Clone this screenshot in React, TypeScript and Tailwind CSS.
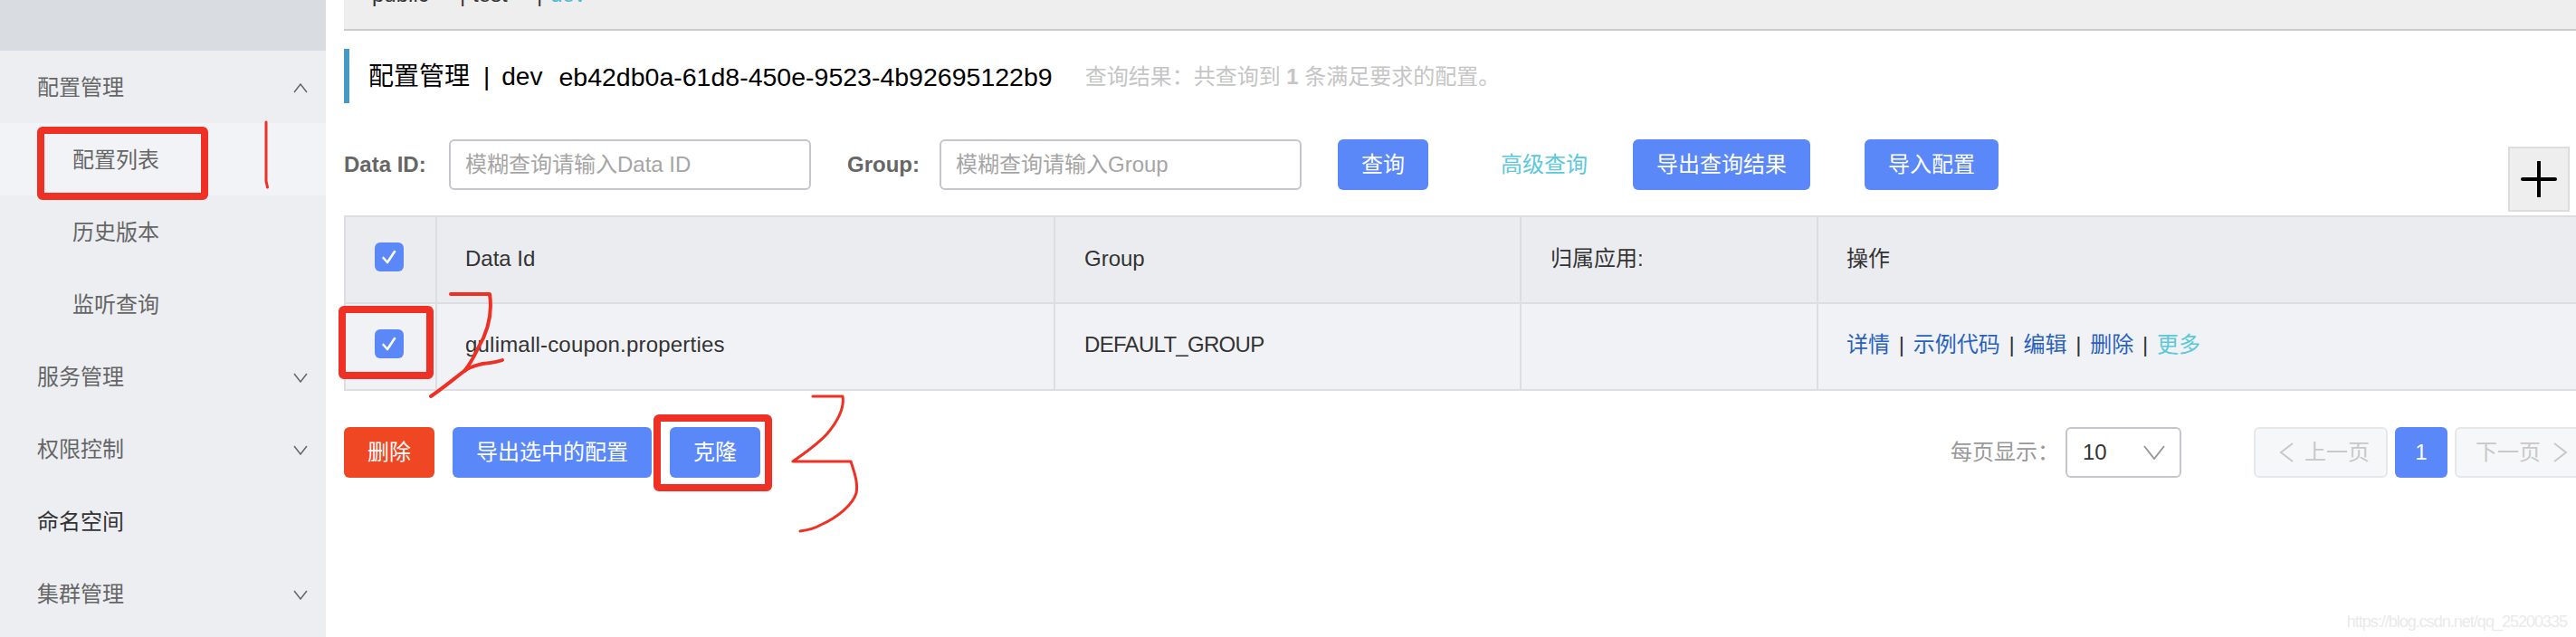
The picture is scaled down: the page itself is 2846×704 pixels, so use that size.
import React from "react";

const font = { fontFamily: '"Liberation Sans", "Noto Sans CJK SC", sans-serif' };

function Chevron({ up = false }: { up?: boolean }) {
  return (
    <svg width="16" height="11" viewBox="0 0 16 11" fill="none" stroke="#666" strokeWidth="1.5">
      <polyline points={up ? "1,10 8,1 15,10" : "1,1 8,10 15,1"} />
    </svg>
  );
}

function NavItem({ label, sub, active, arrow, dark }: { label: string; sub?: boolean; active?: boolean; arrow?: "up" | "down"; dark?: boolean }) {
  return (
    <div
      className={`h-[80px] flex items-center justify-between pt-[2px] pr-[20px] text-[24px] ${sub ? "pl-[80px]" : "pl-[41px]"} ${active ? "bg-[#f2f3f7]" : ""} ${dark ? "text-[#333333]" : "text-[#666666]"}`}
    >
      <span>{label}</span>
      {arrow && <Chevron up={arrow === "up"} />}
    </div>
  );
}

function Check() {
  return (
    <div className="w-[32px] h-[32px] rounded-[6px] bg-[#5b88f8] flex items-center justify-center">
      <svg width="18" height="18" viewBox="0 0 18 18" fill="none" stroke="#fff" strokeWidth="2.6" strokeLinecap="round" strokeLinejoin="round">
        <polyline points="2.5,10 7,15 15,3" />
      </svg>
    </div>
  );
}

function Btn({ w, children, red }: { w: string; children: React.ReactNode; red?: boolean }) {
  return (
    <div className={`${w} h-[56px] shrink-0 rounded-[6px] flex items-center justify-center text-[24px] text-white ${red ? "bg-[#ef4723]" : "bg-[#5b88f8]"}`}>
      {children}
    </div>
  );
}

function Input({ placeholder }: { placeholder: string }) {
  return (
    <div className="w-[400px] h-[56px] shrink-0 border-2 border-[#c4c6cf] rounded-[6px] pl-[16px] flex items-center text-[24px] text-[#a5a5a5]">
      {placeholder}
    </div>
  );
}

const Sep = () => <span className="text-[#333333] mx-[9.75px]">|</span>;
const cell = "border-l-2 border-[#dcdee3] flex items-center text-[24px] text-[#333333]";

export default function App() {
  return (
    <div className="relative w-[2846px] h-[704px] overflow-hidden flex bg-white" style={font}>
      <aside className="w-[360px] shrink-0 bg-[#eceef2]">
        <div className="h-[56px] bg-[#d9dce1]" />
        <NavItem label="配置管理" arrow="up" />
        <NavItem label="配置列表" sub active />
        <NavItem label="历史版本" sub />
        <NavItem label="监听查询" sub />
        <NavItem label="服务管理" arrow="down" />
        <NavItem label="权限控制" arrow="down" />
        <NavItem label="命名空间" dark />
        <NavItem label="集群管理" arrow="down" />
      </aside>

      <main className="flex-1 min-w-0 pl-[20px] overflow-hidden">
        <div className="h-[34px] bg-[#eeeeee] border-b-2 border-[#cccccc] overflow-hidden pl-[31px] text-[24px] text-[#333333]">
          <div className="flex -mt-[22px] h-[32px] items-center">
            <span className="w-[97px]">public</span>
            <span className="w-[14px]">|</span>
            <span className="w-[71px]">test</span>
            <span className="w-[15px]">|</span>
            <span className="text-[#4fb8d6]">dev</span>
          </div>
        </div>

        <div className="mt-[20px] h-[60px] border-l-[6px] border-[#4599c5] pl-[21px] pt-[2px] flex items-center text-[#000000]">
          <span className="text-[28px]">配置管理</span>
          <span className="text-[28px] ml-[15px]">|</span>
          <span className="text-[28px] ml-[13px]">dev</span>
          <span className="text-[28.5px] ml-[18px]">eb42db0a-61d8-450e-9523-4b92695122b9</span>
          <span className="text-[24px] text-[#c5c5c5] ml-[36px]">
            查询结果：共查询到 <b>1</b> 条满足要求的配置。
          </span>
        </div>

        <div className="mt-[40px] h-[84px] flex items-start">
          <div className="h-[56px] w-[116px] shrink-0 flex items-center text-[24px] font-bold text-[#666666]">Data ID:</div>
          <Input placeholder="模糊查询请输入Data ID" />
          <div className="h-[56px] w-[102px] ml-[40px] shrink-0 flex items-center text-[24px] font-bold text-[#666666]">Group:</div>
          <Input placeholder="模糊查询请输入Group" />
          <div className="ml-[40px]"><Btn w="w-[100px]">查询</Btn></div>
          <div className="h-[56px] ml-[80px] w-[146px] shrink-0 flex items-center text-[24px] text-[#5cc8dc]">高级查询</div>
          <Btn w="w-[196px]">导出查询结果</Btn>
          <div className="ml-[60px]"><Btn w="w-[148px]">导入配置</Btn></div>
          <div className="ml-[563px] mt-[8px] w-[68px] h-[72px] shrink-0 bg-[#eeeeee] border-2 border-[#dddddd] flex items-center justify-center">
            <svg width="40" height="40" viewBox="0 0 40 40" stroke="#000" strokeWidth="4" strokeLinecap="round">
              <line x1="2" y1="20" x2="38" y2="20" />
              <line x1="20" y1="1" x2="20" y2="39" />
            </svg>
          </div>
        </div>

        <div className="border-t-2 border-b-2 border-[#dcdee3]">
          <div className="grid grid-cols-[101px_683px_515px_328px_1fr] h-[94px] bg-[#ebecf0]">
            <div className={`${cell} justify-center pb-[6px] pr-[3px]`}><Check /></div>
            <div className={`${cell} pl-[31px] pb-[2px]`}>Data Id</div>
            <div className={`${cell} pl-[32px] pb-[2px]`}>Group</div>
            <div className={`${cell} pl-[32px] pb-[2px]`}>归属应用:</div>
            <div className={`${cell} pl-[31px] pb-[2px]`}>操作</div>
          </div>
          <div className="grid grid-cols-[101px_683px_515px_328px_1fr] h-[96px] bg-[#f1f2f6] border-t-2 border-[#dcdee3]">
            <div className={`${cell} justify-center pb-[6px] pr-[3px]`}><Check /></div>
            <div className={`${cell} pl-[31px] pb-[4px] tracking-[0.2px]`}>gulimall-coupon.properties</div>
            <div className={`${cell} pl-[32px] pb-[4px] tracking-[-0.7px]`}>DEFAULT_GROUP</div>
            <div className={cell} />
            <div className={`${cell} pl-[31px] pb-[4px]`}>
              <span className="text-[#2a62bd]">详情</span>
              <Sep />
              <span className="text-[#2a62bd]">示例代码</span>
              <Sep />
              <span className="text-[#2a62bd]">编辑</span>
              <Sep />
              <span className="text-[#2a62bd]">删除</span>
              <Sep />
              <span className="text-[#5cc8dc]">更多</span>
            </div>
          </div>
        </div>

        <div className="mt-[40px] h-[56px] flex items-center">
          <Btn w="w-[100px]" red>删除</Btn>
          <div className="ml-[20px]"><Btn w="w-[220px]">导出选中的配置</Btn></div>
          <div className="ml-[20px]"><Btn w="w-[100px]">克隆</Btn></div>
          <div className="ml-[1315px] w-[127px] shrink-0 text-[24px] text-[#999999]">每页显示：</div>
          <div className="w-[128px] h-[56px] shrink-0 border-2 border-[#c4c6cf] rounded-[6px] pl-[17px] pr-[16px] flex items-center justify-between text-[24px] text-[#333333]">
            <span>10</span>
            <svg width="24" height="16" viewBox="0 0 24 16" fill="none" stroke="#999" strokeWidth="2">
              <polyline points="1,1 12,15 23,1" />
            </svg>
          </div>
          <div className="ml-[80px] w-[148px] h-[56px] shrink-0 border-2 border-[#e6e7eb] bg-[#f6f7f9] rounded-[6px] pl-[26px] flex items-center gap-[12px] text-[24px] text-[#c8c8c8]">
            <svg width="16" height="22" viewBox="0 0 16 22" fill="none" stroke="#c8c8c8" strokeWidth="2">
              <polyline points="15,1 2,11 15,21" />
            </svg>
            <span>上一页</span>
          </div>
          <div className="ml-[8px] w-[58px] h-[56px] shrink-0 rounded-[6px] bg-[#5b88f8] flex items-center justify-center text-[24px] text-white">1</div>
          <div className="ml-[8px] w-[148px] h-[56px] shrink-0 border-2 border-[#e6e7eb] bg-[#f6f7f9] rounded-[6px] pl-[21px] flex items-center gap-[14px] text-[24px] text-[#c8c8c8]">
            <span>下一页</span>
            <svg width="16" height="22" viewBox="0 0 16 22" fill="none" stroke="#c8c8c8" strokeWidth="2">
              <polyline points="1,1 14,11 1,21" />
            </svg>
          </div>
        </div>
      </main>

      <svg className="absolute left-0 top-0 pointer-events-none" width="2846" height="704" fill="none" stroke="#ee3124" strokeLinecap="round" strokeLinejoin="round">
        <rect x="45" y="144" width="181" height="73" rx="2" strokeWidth="8" />
        <rect x="378" y="342" width="97" height="73" rx="2" strokeWidth="8" />
        <rect x="726" y="462" width="123" height="77" rx="2" strokeWidth="8" />
        <path d="M294 135 L294 200 L295.500 207" strokeWidth="3" />
        <path d="M498 325 L541 325 C544 345 540 365 528 385 C522 398 518 404 513 410 C500 420 488 430 476 438" strokeWidth="4" />
        <path d="M513 410 C520 405 526 404 533 402 C542 401 550 400 555 398" strokeWidth="4" />
        <path d="M898 438 L931 438 C933 450 928 462 915 478 C905 490 890 500 876 510 L940 510 C945 525 948 535 946 545 C942 558 925 572 907 580 C900 584 892 586 884 587" strokeWidth="3" />
      </svg>

      <div className="absolute right-[10px] top-[674px] text-[18px] tracking-[-1px] text-[#eaeaea]">https://blog.csdn.net/qq_25200335</div>
    </div>
  );
}
